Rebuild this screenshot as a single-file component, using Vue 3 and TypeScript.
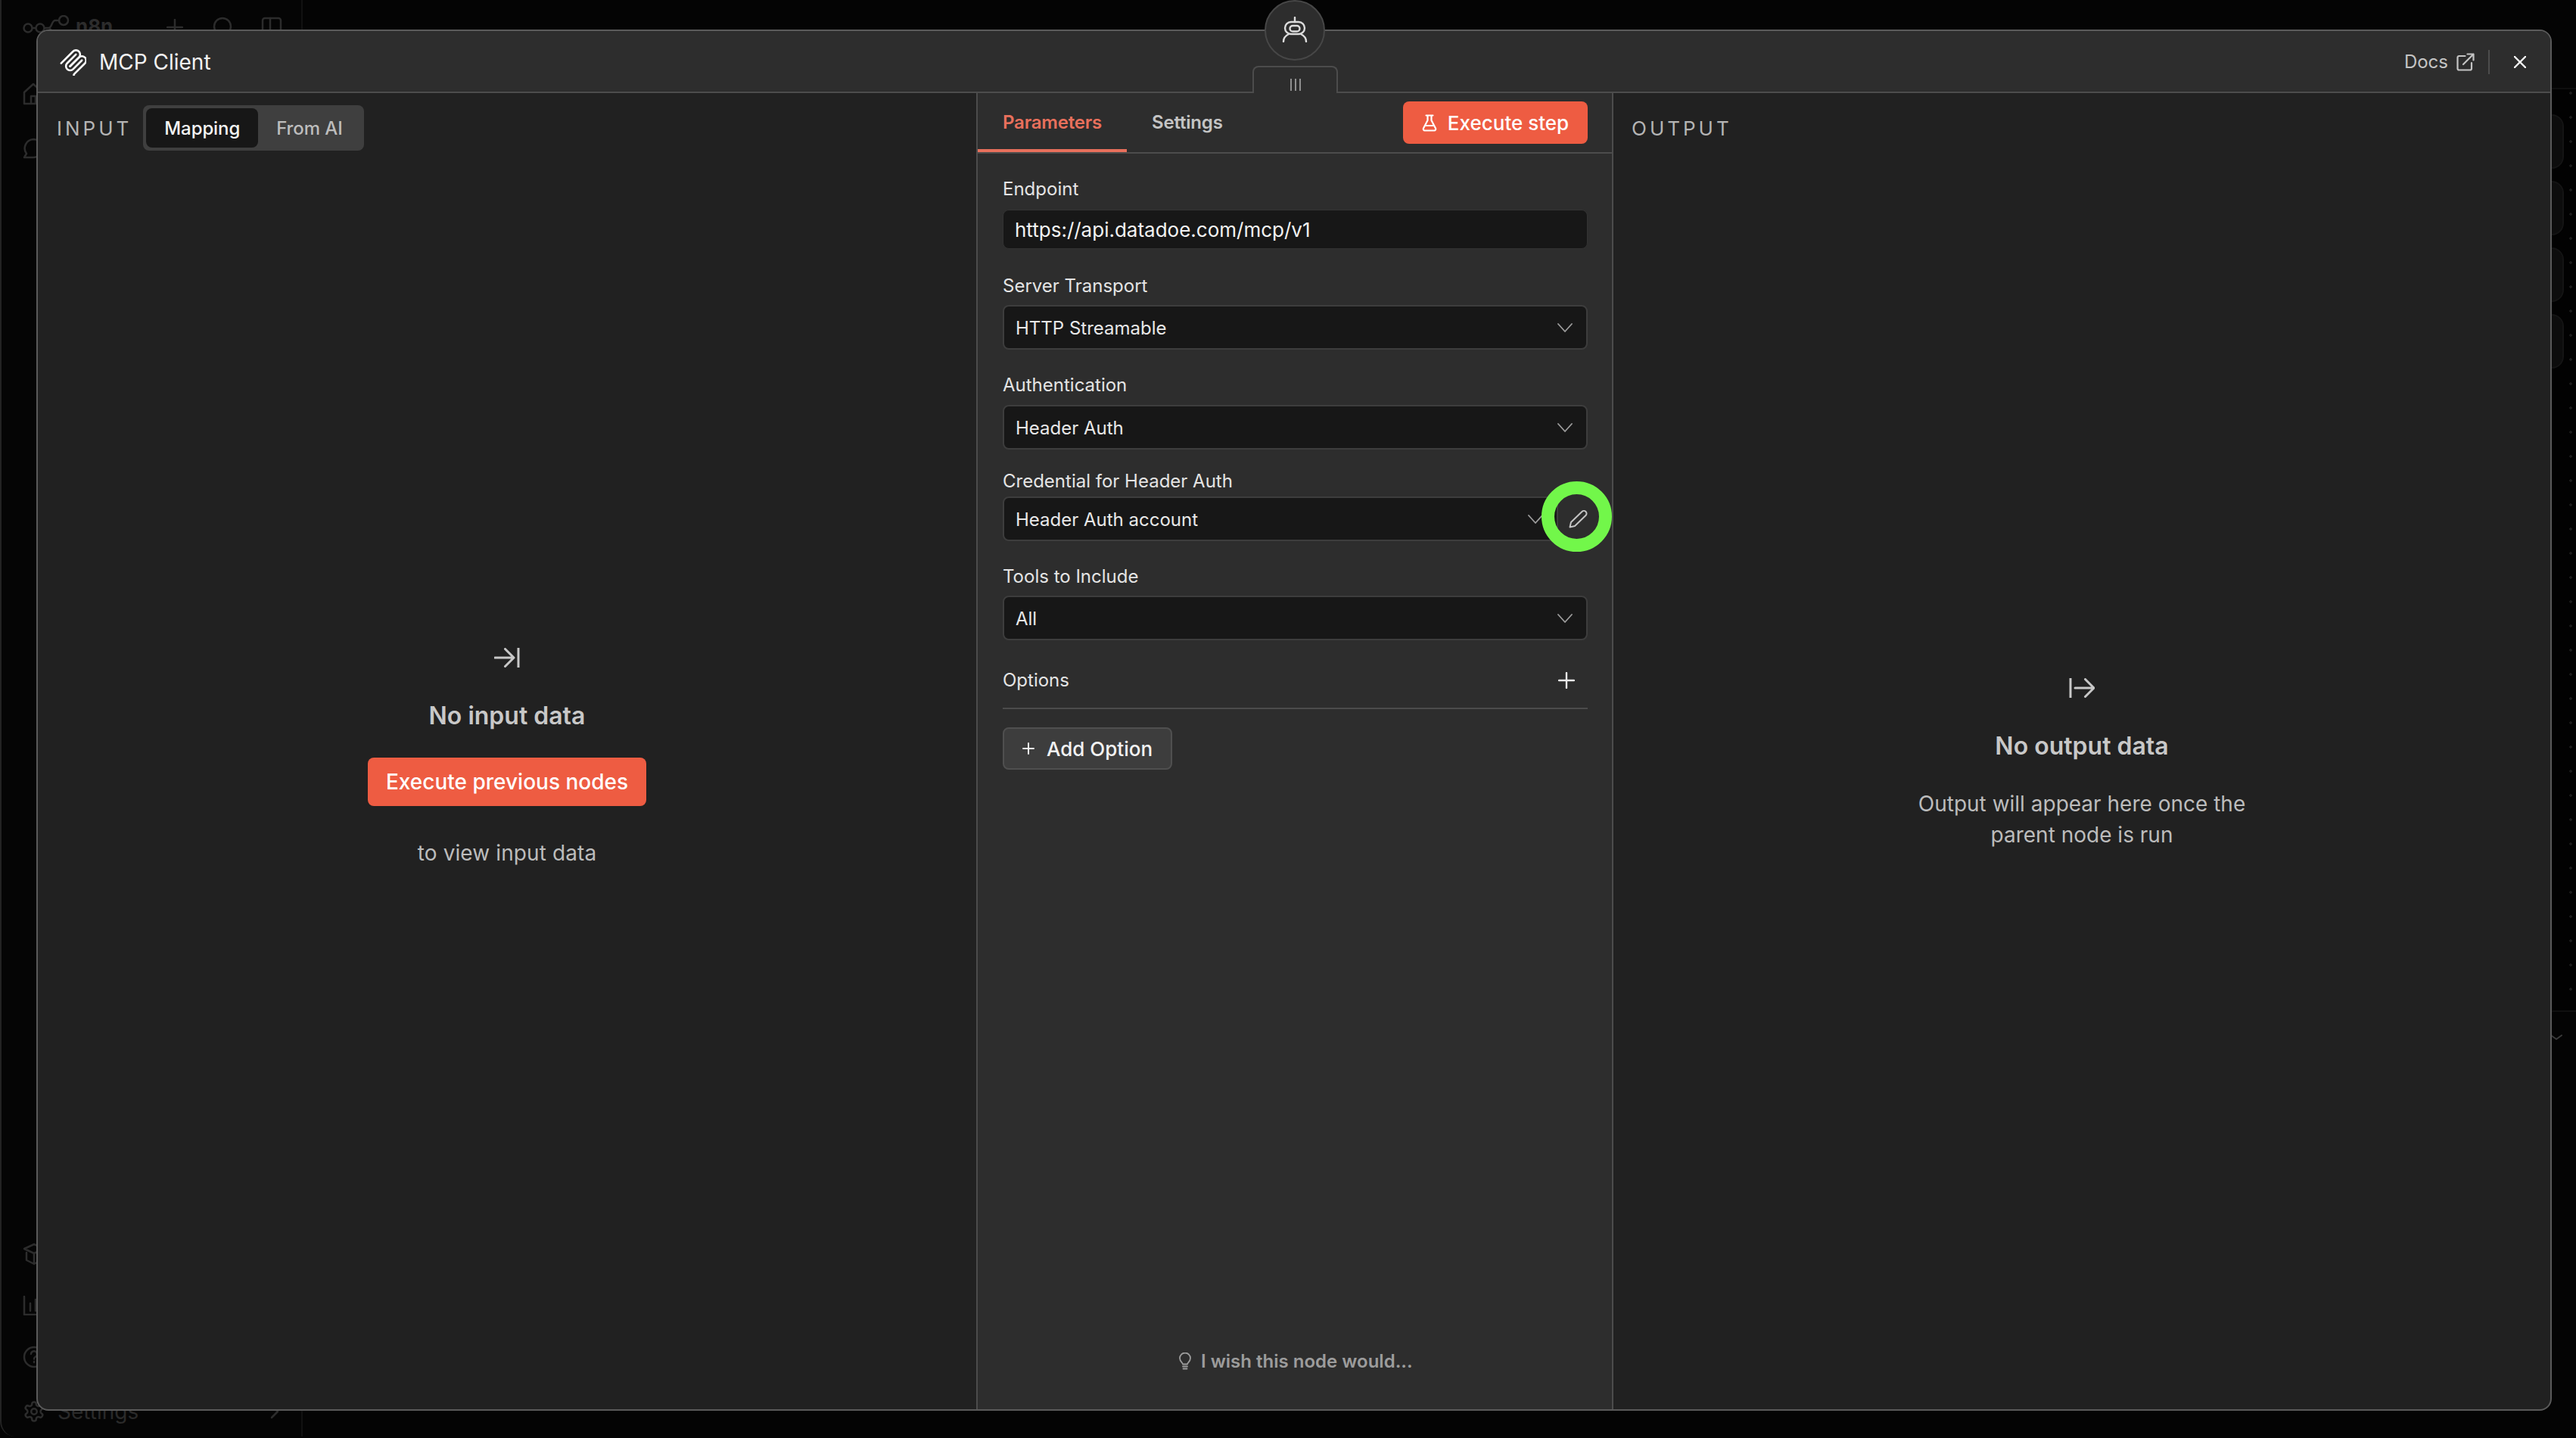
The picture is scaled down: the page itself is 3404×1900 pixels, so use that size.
<script setup lang="ts">
interface Field {
  label: string;
  value: string;
  kind?: string;
}

const fields: Field[] = [
  { label: 'Server Transport', value: 'HTTP Streamable', kind: 'transport' },
  { label: 'Authentication', value: 'Header Auth', kind: 'auth' },
  { label: 'Credential for Header Auth', value: 'Header Auth account', kind: 'credential' },
  { label: 'Tools to Include', value: 'All', kind: 'tools' },
];
</script>

<template>
  <div class="page">
    <div class="backdrop">
      <aside class="sidebar">
        <div class="brand">
          <svg class="brand-logo" width="62" height="40" viewBox="0 0 62 40">
            <circle cx="7" cy="17" r="5.5" />
            <circle cx="23" cy="17" r="5.5" />
            <circle cx="54" cy="7" r="6" />
            <path d="M13 17h4M29 17h5c5 0 4-10 9-10h5M34 17c5 0 4 10 9 10h5" />
          </svg>
          <span class="brand-name">n8n</span>
          <svg class="brand-icon plus-faint" width="22" height="22" viewBox="0 0 22 22"><path d="M11 1v20M1 11h20" /></svg>
          <svg class="brand-icon search-faint" width="26" height="26" viewBox="0 0 26 26"><circle cx="13" cy="13" r="11" /></svg>
          <svg class="brand-icon panel-faint" width="28" height="28" viewBox="0 0 28 28"><rect x="2" y="2" width="24" height="24" rx="3" /><path d="M12 2v24" /></svg>
        </div>
        <svg class="nav-icon home" width="28" height="30" viewBox="0 0 28 30"><path d="M2 13 14 2l12 11v15H2zM11 28V18h6v10" /></svg>
        <svg class="nav-icon chat" width="28" height="30" viewBox="0 0 28 30"><path d="M14 2a12 12 0 0 1 0 24H2l3-5A12 12 0 0 1 14 2z" /></svg>
        <div class="sidebar-bottom">
          <svg class="nav-icon" width="30" height="30" viewBox="0 0 30 30"><path d="M15 2 28 8 15 14 2 8zM5 13v10l10 5 10-5V13M15 14v14" /></svg>
          <svg class="nav-icon" width="30" height="26" viewBox="0 0 30 26"><path d="M2 1v24h26M10 20V10M17 20V5M24 20v-7" /></svg>
          <svg class="nav-icon" width="30" height="30" viewBox="0 0 30 30"><circle cx="15" cy="15" r="13" /><path d="M11 11a4 4 0 1 1 5.500 4c-1 .5-1.500 1-1.500 2.500M15 21v1" /></svg>
          <div class="settings-row">
            <svg class="nav-icon gear" width="30" height="30" viewBox="0 0 24 24">
              <path d="M12.220 2h-.44a2 2 0 0 0-2 2v.18a2 2 0 0 1-1 1.730l-.43.25a2 2 0 0 1-2 0l-.15-.08a2 2 0 0 0-2.730.73l-.22.38a2 2 0 0 0 .73 2.730l.15.1a2 2 0 0 1 1 1.720v.51a2 2 0 0 1-1 1.740l-.15.09a2 2 0 0 0-.73 2.730l.22.38a2 2 0 0 0 2.730.73l.15-.08a2 2 0 0 1 2 0l.43.25a2 2 0 0 1 1 1.730V20a2 2 0 0 0 2 2h.44a2 2 0 0 0 2-2v-.18a2 2 0 0 1 1-1.730l.43-.25a2 2 0 0 1 2 0l.15.08a2 2 0 0 0 2.730-.73l.22-.39a2 2 0 0 0-.73-2.730l-.15-.08a2 2 0 0 1-1-1.740v-.5a2 2 0 0 1 1-1.740l.15-.09a2 2 0 0 0 .73-2.730l-.22-.38a2 2 0 0 0-2.730-.73l-.15.08a2 2 0 0 1-2 0l-.43-.25a2 2 0 0 1-1-1.730V4a2 2 0 0 0-2-2z" />
              <circle cx="12" cy="12" r="3" />
            </svg>
            <span class="settings-label">Settings</span>
            <svg class="nav-icon settings-chevron" width="12" height="20" viewBox="0 0 12 20"><path d="M2 2l8 8-8 8" /></svg>
          </div>
        </div>
      </aside>
      <div class="canvas-area">
        <div class="canvas-top"></div>
        <div class="canvas">
          <div class="side-cards">
            <div v-for="n in 4" :key="n" class="side-card"></div>
          </div>
        </div>
        <div class="canvas-foot">
          <svg class="foot-chevron" width="16" height="8" viewBox="0 0 16 8"><path d="M1 1l7 5 7-5" /></svg>
        </div>
      </div>
    </div>

    <div class="modal">
      <header class="modal-header">
        <svg class="mcp-logo" width="36" height="36" viewBox="0 0 195 195">
          <path d="M15 106.500 99.900 21.600c11.700-11.700 30.700-11.700 42.400 0 11.700 11.700 11.700 30.700 0 42.400L78.200 128.100" />
          <path d="M79.100 127.200 142.300 64c11.700-11.700 30.700-11.700 42.400 0l.4.4c11.700 11.700 11.700 30.700 0 42.400l-76.700 76.700c-3.900 3.900-3.900 10.200 0 14.100l15.800 15.800" />
          <path d="M121.100 42.800 58.400 105.500c-11.700 11.700-11.700 30.700 0 42.400 11.700 11.700 30.700 11.700 42.400 0l62.700-62.700" />
        </svg>
        <span class="modal-title">MCP Client</span>
        <span class="docs">Docs</span>
        <svg class="docs-icon" width="24" height="24" viewBox="0 0 24 24">
          <path d="M11.500 4H3.500a2 2 0 0 0-2 2v14.500a2 2 0 0 0 2 2H18a2 2 0 0 0 2-2V13" />
          <path d="M9 15 22.500 1.500M14.500 1.500h8v8" />
        </svg>
        <span class="header-sep"></span>
        <svg class="close-icon" width="16" height="16" viewBox="0 0 16 16"><path d="M1 1l14 14M15 1 1 15" /></svg>
      </header>

      <div class="robot">
        <svg width="34" height="34" viewBox="0 0 34 34">
          <path d="M17 1v6" />
          <rect x="4" y="7" width="26" height="16" rx="8" />
          <rect x="10.500" y="12" width="13" height="7.500" rx="3.750" />
          <path d="M2 33c0-5 3-8 7-10M32 33c0-5-3-8-7-10" />
        </svg>
      </div>
      <div class="drag-handle"><i></i><i></i><i></i></div>

      <div class="modal-body">
        <section class="panel panel-input">
          <div class="panel-head">
            <span class="panel-title">INPUT</span>
            <div class="toggle">
              <button class="toggle-btn active">Mapping</button>
              <button class="toggle-btn">From AI</button>
            </div>
          </div>
          <div class="empty empty-input">
            <svg class="empty-icon" width="34" height="26" viewBox="0 0 34 26">
              <path d="M1 13h25M14.500 1.500 26 13 14.500 24.500M32 0v26" />
            </svg>
            <div class="empty-title">No input data</div>
            <button class="run-btn">Execute previous nodes</button>
            <div class="empty-text">to view input data</div>
          </div>
        </section>

        <section class="panel-params">
          <div class="tabs">
            <div class="tab active">Parameters</div>
            <div class="tab">Settings</div>
            <button class="step-btn">
              <svg width="20" height="23" viewBox="0 0 20 23">
                <path d="M5.500 1.500h9M7.500 1.500V8L2 18.500A2 2 0 0 0 3.800 21.500h12.400A2 2 0 0 0 18 18.500L12.500 8V1.500M4.500 15h11" />
              </svg>
              Execute step
            </button>
          </div>

          <div class="form">
            <div class="field field-endpoint">
              <div class="field-label">Endpoint</div>
              <div class="text-input">https://api.datadoe.com/mcp/v1</div>
            </div>

            <div v-for="field in fields" :key="field.label" class="field" :class="`field-${field.kind}`">
              <div class="field-label">{{ field.label }}</div>
              <div class="select-row">
                <div class="select">
                  <span>{{ field.value }}</span>
                  <svg width="20" height="12" viewBox="0 0 20 12"><path d="M1 1l9 10 9-10" /></svg>
                </div>
                <template v-if="field.kind === 'credential'">
                  <svg class="pencil" width="26" height="26" viewBox="0 0 26 26">
                    <path d="M2.500 23.500 4 17 18.500 3a3.500 3.500 0 0 1 5 5L9 22z" />
                  </svg>
                  <span class="highlight-ring"></span>
                </template>
              </div>
            </div>

            <div class="options-row">
              <span class="field-label">Options</span>
              <svg width="22" height="22" viewBox="0 0 22 22"><path d="M11 1v20M1 11h20" /></svg>
            </div>

            <button class="add-btn">
              <svg width="16" height="16" viewBox="0 0 16 16"><path d="M8 1v14M1 8h14" /></svg>
              Add Option
            </button>
          </div>

          <div class="wish">
            <svg width="16" height="23" viewBox="0 0 16 23">
              <path d="M5 15.500c0-2-4-3.500-4-8a7 7 0 0 1 14 0c0 4.500-4 6-4 8zM5 18.500h6M5.500 21.500h5" />
            </svg>
            I wish this node would...
          </div>
        </section>

        <section class="panel panel-output">
          <div class="panel-head">
            <span class="panel-title">OUTPUT</span>
          </div>
          <div class="empty empty-output">
            <svg class="empty-icon" width="34" height="26" viewBox="0 0 34 26">
              <path d="M2 0v26M8 13h25M21.500 1.500 33 13 21.500 24.500" />
            </svg>
            <div class="empty-title">No output data</div>
            <div class="empty-text">Output will appear here once the<br />parent node is run</div>
          </div>
        </section>
      </div>
    </div>
  </div>
</template>

<style scoped>
.page {
  position: relative;
  width: 3404px;
  height: 1900px;
  overflow: hidden;
  background: #040404;
  font-family: Inter, 'Liberation Sans', sans-serif;
}

svg {
  display: block;
  flex: none;
  fill: none;
  stroke-linecap: round;
  stroke-linejoin: round;
}

/* faded workflow editor behind the modal */
.backdrop {
  position: absolute;
  inset: 0;
  display: flex;
}

.sidebar {
  width: 400px;
  height: 1898px;
  box-sizing: border-box;
  border-left: 2px solid #232323;
  border-right: 2px solid #111;
  border-bottom-left-radius: 20px;
  padding: 20px 0 0 28px;
  display: flex;
  flex-direction: column;
  background: #050505;
}

.nav-icon,
.brand-logo,
.brand-icon {
  stroke: #2c2c2c;
  stroke-width: 2.500;
}

.gear {
  stroke-width: 2;
}

.brand {
  display: flex;
  align-items: flex-start;
  height: 56px;
}

.brand-name {
  margin-left: 8px;
  color: #2c2c2c;
  font-size: 26px;
  font-weight: 700;
  line-height: 30px;
}

.plus-faint {
  margin: 5px 0 0 71px;
}

.search-faint {
  margin: 2px 0 0 39px;
}

.panel-faint {
  margin: 2px 0 0 38px;
}

.home {
  margin-top: 33px;
}

.chat {
  margin-top: 43px;
}

.sidebar-bottom {
  margin-top: auto;
  padding-bottom: 16px;
  display: flex;
  flex-direction: column;
  gap: 40px;
}

.settings-row {
  display: flex;
  align-items: center;
}

.settings-label {
  margin-left: 16px;
  color: #2a2a2a;
  font-size: 28px;
}

.settings-chevron {
  margin-left: 174px;
}

.canvas-area {
  flex: 1;
  display: flex;
  flex-direction: column;
}

.canvas-top {
  height: 118px;
  border-bottom: 2px solid #0e0e0e;
  box-sizing: border-box;
}

.canvas {
  height: 1217px;
  padding-top: 33px;
  box-sizing: border-box;
  background-color: #020202;
  background-image: radial-gradient(#1c1c1c 1.500px, transparent 2px);
  background-size: 32px 32px;
  background-position: 5px 21px;
}

.side-cards {
  width: 2988px;
  display: flex;
  flex-direction: column;
  gap: 16px;
}

.side-card {
  height: 72px;
  border-radius: 16px;
  background: #0d0d0d;
  border: 2px solid #141414;
  box-sizing: border-box;
}

.canvas-foot {
  flex: 1;
  border-top: 2px solid #101010;
  padding: 30px 0 0 2970px;
}

.foot-chevron {
  stroke: #3a3a3a;
  stroke-width: 2;
}

/* modal */
.modal {
  position: absolute;
  left: 48px;
  top: 39px;
  width: 3324px;
  height: 1825px;
  box-sizing: border-box;
  display: flex;
  flex-direction: column;
  border: 2px solid #5a5a5a;
  border-radius: 16px;
  background: #212121;
  color: #e4e4e4;
}

.modal-header {
  height: 82px;
  flex: none;
  box-sizing: border-box;
  display: flex;
  align-items: center;
  padding: 1px 32px 0 28px;
  background: #2d2d2d;
  border-bottom: 2px solid #4c4c4c;
  border-radius: 14px 14px 0 0;
}

.mcp-logo {
  stroke: #fff;
  stroke-width: 14;
}

.modal-title {
  margin-left: 17px;
  flex: 1;
  font-size: 28px;
  color: #f2f2f2;
}

.docs {
  font-size: 24px;
  color: #c4c4c4;
}

.docs-icon {
  margin-left: 11px;
  stroke: #c4c4c4;
  stroke-width: 2.200;
}

.header-sep {
  width: 2px;
  height: 32px;
  margin: 0 32px 0 18px;
  background: #4c4c4c;
}

.close-icon {
  stroke: #fff;
  stroke-width: 2.400;
}

.robot {
  position: absolute;
  left: 1621px;
  top: -41px;
  width: 80px;
  height: 80px;
  box-sizing: border-box;
  display: flex;
  align-items: center;
  justify-content: center;
  padding-bottom: 3px;
  border: 2px solid #474747;
  border-radius: 50%;
  background: #2d2d2d;
}

.robot svg {
  stroke: #dcdcdc;
  stroke-width: 2.400;
}

.drag-handle {
  position: absolute;
  left: 1605px;
  top: 46px;
  width: 113px;
  height: 38px;
  box-sizing: border-box;
  display: flex;
  justify-content: center;
  gap: 4px;
  padding-top: 15px;
  border: 2px solid #4c4c4c;
  border-bottom: 0;
  border-radius: 8px 8px 0 0;
  background: #2d2d2d;
}

.drag-handle i {
  width: 2px;
  height: 16px;
  background: #8f8f8f;
}

.modal-body {
  flex: 1;
  display: flex;
  min-height: 0;
}

.panel {
  display: flex;
  flex-direction: column;
}

.panel-input {
  width: 1240px;
}

.panel-output {
  flex: 1;
}

.panel-head {
  height: 76px;
  box-sizing: border-box;
  display: flex;
  align-items: center;
  padding-top: 16px;
}

.panel-input .panel-head {
  padding-left: 25px;
}

.panel-output .panel-head {
  padding-left: 24px;
}

.panel-title {
  font-size: 26px;
  letter-spacing: 4px;
  color: #b4b4b4;
}

.toggle {
  margin-left: 15px;
  padding: 4px;
  display: flex;
  border-radius: 8px;
  background: #3f3f3f;
}

.toggle-btn {
  height: 52px;
  padding: 0 24px;
  border: 0;
  border-radius: 8px;
  background: transparent;
  font-family: inherit;
  font-size: 24px;
  font-weight: 500;
  letter-spacing: -0.100px;
  color: #bdbdbd;
}

.toggle-btn.active {
  background: #171717;
  color: #f4f4f4;
}

.empty {
  display: flex;
  flex-direction: column;
  align-items: center;
  text-align: center;
}

.empty-input {
  padding-top: 657px;
}

.empty-output {
  padding-top: 697px;
}

.empty-icon {
  stroke: #c8c8c8;
  stroke-width: 3;
}

.empty-title {
  margin-top: 44px;
  font-size: 32px;
  line-height: 40px;
  font-weight: 600;
  color: #c8c8c8;
}

.run-btn {
  margin-top: 35px;
  width: 368px;
  height: 64px;
  border: 0;
  border-radius: 8px;
  background: #ee5c42;
  color: #fff;
  font-family: inherit;
  font-size: 28px;
  font-weight: 500;
}

.empty-text {
  font-size: 28px;
  line-height: 41px;
  color: #bcbcbc;
}

.empty-input .empty-text {
  margin-top: 42px;
  letter-spacing: 0.100px;
}

.empty-output .empty-text {
  margin-top: 36px;
}

/* parameters panel */
.panel-params {
  position: relative;
  width: 842px;
  flex: none;
  box-sizing: border-box;
  display: flex;
  flex-direction: column;
  border-left: 2px solid #4c4c4c;
  border-right: 2px solid #4c4c4c;
  background: #2d2d2d;
}

.tabs {
  height: 80px;
  flex: none;
  box-sizing: border-box;
  display: flex;
  padding-right: 32px;
  border-bottom: 2px solid #4c4c4c;
}

.tab {
  height: 78px;
  box-sizing: border-box;
  padding: 0 33px;
  line-height: 78px;
  font-size: 24px;
  font-weight: 600;
  letter-spacing: -0.200px;
  color: #c4c4c4;
}

.tab.active {
  border-bottom: 4px solid #e8705c;
  color: #e8705c;
}

.step-btn {
  margin: 11px 0 0 auto;
  width: 244px;
  height: 56px;
  display: flex;
  align-items: center;
  justify-content: center;
  gap: 14px;
  padding-top: 1px;
  border: 0;
  border-radius: 8px;
  background: #ee5c42;
  color: #fff;
  font-family: inherit;
  font-size: 26px;
  font-weight: 500;
}

.step-btn svg {
  stroke: #fff;
  stroke-width: 2.200;
}

.form {
  padding: 31px 32px 0 33px;
  display: flex;
  flex-direction: column;
}

.field-label {
  height: 32px;
  line-height: 32px;
  font-size: 24px;
  font-weight: 400;
  color: #e4e4e4;
}

.field-endpoint .field-label {
  margin-bottom: 11px;
}

.text-input {
  height: 52px;
  box-sizing: border-box;
  padding: 0 15px;
  line-height: 52px;
  border: 1px solid #333;
  border-radius: 8px;
  background: #171717;
  font-size: 26px;
  color: #f2f2f2;
}

.field-transport {
  margin-top: 33px;
}

.field-auth {
  margin-top: 31px;
}

.field-credential {
  margin-top: 26px;
}

.field-tools {
  margin-top: 31px;
}

.field-transport .field-label,
.field-tools .field-label {
  margin-bottom: 9px;
}

.field-auth .field-label {
  margin-bottom: 10px;
}

.field-credential .field-label {
  margin-bottom: 4px;
}

.select-row {
  position: relative;
  display: flex;
  align-items: center;
}

.select {
  flex: 1;
  height: 59px;
  box-sizing: border-box;
  display: flex;
  align-items: center;
  justify-content: space-between;
  padding: 1px 18px 0 15px;
  border: 2px solid #3d3d3d;
  border-radius: 8px;
  background: #171717;
  font-size: 24px;
  font-weight: 400;
  color: #e8e8e8;
}

.select svg {
  stroke: #9c9c9c;
  stroke-width: 1.800;
}

.pencil {
  margin: 0 0 0 13px;
  stroke: #c4c4c4;
  stroke-width: 2;
}

.highlight-ring {
  position: absolute;
  right: -32px;
  top: -20px;
  width: 93px;
  height: 93px;
  box-sizing: border-box;
  border: 17px solid #72f74a;
  border-radius: 50%;
}

.options-row {
  margin-top: 37px;
  height: 54px;
  padding-bottom: 21px;
  box-sizing: border-box;
  display: flex;
  align-items: center;
  justify-content: space-between;
  padding-right: 17px;
  border-bottom: 2px solid #4c4c4c;
}

.options-row svg {
  stroke: #eaeaea;
  stroke-width: 2.400;
}

.add-btn {
  margin-top: 24px;
  align-self: flex-start;
  width: 224px;
  height: 56px;
  display: flex;
  align-items: center;
  justify-content: center;
  gap: 16px;
  border: 2px solid #4f4f4f;
  border-radius: 8px;
  background: #3d3d3d;
  color: #f2f2f2;
  font-family: inherit;
  font-size: 26px;
  font-weight: 500;
}

.add-btn svg {
  stroke: #f2f2f2;
  stroke-width: 2;
}

.wish {
  position: absolute;
  left: 266px;
  bottom: 49px;
  display: flex;
  align-items: center;
  gap: 13px;
  font-size: 24px;
  font-weight: 600;
  color: #9c9c9c;
}

.wish svg {
  stroke: #9c9c9c;
  stroke-width: 1.800;
}
</style>

<style>
html,
body {
  margin: 0;
  background: #040404;
}
</style>
